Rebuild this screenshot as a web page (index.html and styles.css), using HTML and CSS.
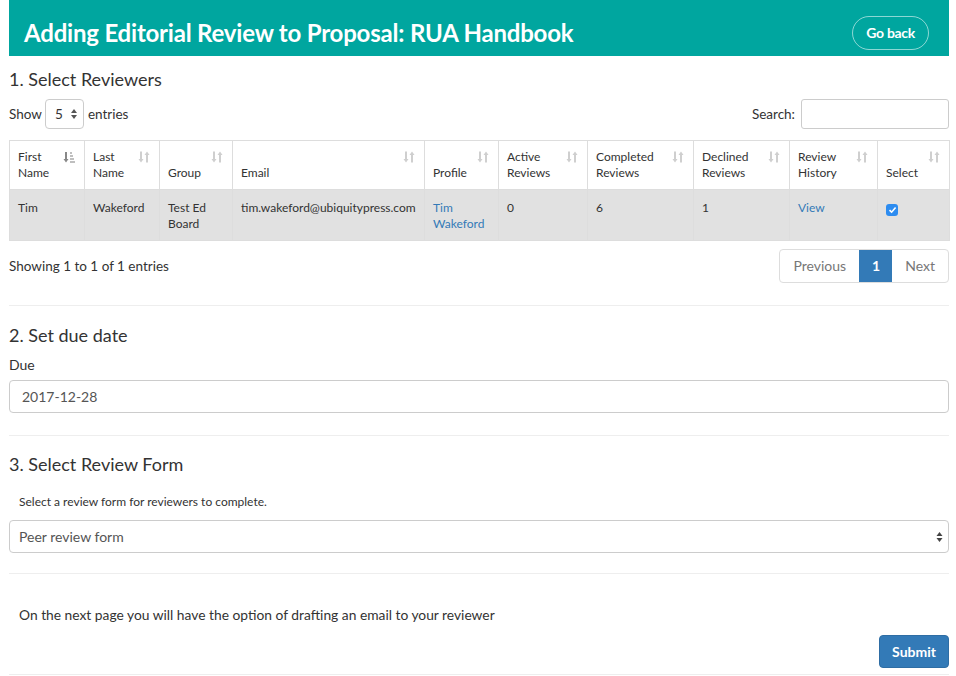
FILE: index.html
```html
<!DOCTYPE html>
<html lang="en">
<head>
    <meta charset="UTF-8">
    <title>Add Editorial Review</title>
    <link rel="stylesheet" href="styles.css">
</head>
<body>
    <div class="page">
        <div class="header">
            <h1>Adding Editorial Review to Proposal: RUA Handbook</h1>
            <a class="back" href="#">Go back</a>
        </div>

        <h3 class="first">1. Select Reviewers</h3>
        <div class="dt-top">
            <label class="length">Show
                <span class="mini-select">5 <svg width="6" height="10" viewBox="0 0 6 10"><path d="M3 0L6 4H0z M3 10L0 6H6z" fill="#555"/></svg></span>
                entries</label>
            <label class="search">Search: <input type="text"></label>
        </div>

        <table class="reviewers">
            <colgroup>
                <col style="width: 75px"><col style="width: 75px"><col style="width: 73px"><col style="width: 192px"><col style="width: 74px">
                <col style="width: 89px"><col style="width: 106px"><col style="width: 96px"><col style="width: 88px"><col style="width: 72px">
            </colgroup>
            <thead>
                <tr>
                    <th>First<br>Name <svg class="sort on" viewBox="0 0 12 12"><path d="M3 1V9" stroke="#888" stroke-width="2"/><path d="M0.5 8L3 11.5L5.5 8z" fill="#888"/><path d="M7 2H9M7 5H10M7 8H11M7 11H12" stroke="#aaa" stroke-width="1.6"/></svg></th>
                    <th>Last<br>Name <svg class="sort" viewBox="0 0 12 12"><use href="#sort"/></svg></th>
                    <th>Group <svg class="sort" viewBox="0 0 12 12"><use href="#sort"/></svg></th>
                    <th>Email <svg class="sort" viewBox="0 0 12 12"><use href="#sort"/></svg></th>
                    <th>Profile <svg class="sort" viewBox="0 0 12 12"><use href="#sort"/></svg></th>
                    <th>Active<br>Reviews <svg class="sort" viewBox="0 0 12 12"><use href="#sort"/></svg></th>
                    <th>Completed<br>Reviews <svg class="sort" viewBox="0 0 12 12"><use href="#sort"/></svg></th>
                    <th>Declined<br>Reviews <svg class="sort" viewBox="0 0 12 12"><use href="#sort"/></svg></th>
                    <th>Review<br>History <svg class="sort" viewBox="0 0 12 12"><use href="#sort"/></svg></th>
                    <th>Select <svg class="sort" viewBox="0 0 12 12"><use href="#sort"/></svg></th>
                </tr>
            </thead>
            <tbody>
                <tr>
                    <td>Tim</td>
                    <td>Wakeford</td>
                    <td>Test Ed<br>Board</td>
                    <td>tim.wakeford@ubiquitypress.com</td>
                    <td><a href="#">Tim<br>Wakeford</a></td>
                    <td>0</td>
                    <td>6</td>
                    <td>1</td>
                    <td><a href="#">View</a></td>
                    <td><span class="check"><svg width="9" height="8" viewBox="0 0 9 8"><path d="M1.5 4.2L3.6 6.2L7.6 1.5" stroke="#fff" stroke-width="1.6" fill="none"/></svg></span></td>
                </tr>
            </tbody>
        </table>

        <svg width="0" height="0" class="defs">
            <symbol id="sort" viewBox="0 0 12 12">
                <path d="M3 0.5V8.5" stroke="#cfcfcf" stroke-width="2"/>
                <path d="M0.5 8L3 11.5L5.5 8z" fill="#cfcfcf"/>
                <path d="M9 3.5V11.5" stroke="#cfcfcf" stroke-width="2"/>
                <path d="M6.5 4L9 0.5L11.5 4z" fill="#cfcfcf"/>
            </symbol>
        </svg>

        <div class="dt-bottom">
            <div class="info">Showing 1 to 1 of 1 entries</div>
            <div class="pager">
                <a class="prev">Previous</a>
                <a class="current">1</a>
                <a class="next">Next</a>
            </div>
        </div>

        <hr>

        <h3>2. Set due date</h3>
        <label class="field-label">Due</label>
        <div class="input">2017-12-28</div>

        <hr>

        <h3>3. Select Review Form</h3>
        <p class="help">Select a review form for reviewers to complete.</p>
        <div class="input select">Peer review form
            <svg width="7" height="12" viewBox="0 0 7 12"><path d="M3.5 1L6.5 5H0.5z M3.5 11L0.5 7H6.5z" fill="#444"/></svg>
        </div>

        <hr class="after-select">

        <p class="note">On the next page you will have the option of drafting an email to your reviewer</p>
        <div class="actions"><button class="submit">Submit</button></div>
        <hr class="last">
    </div>
</body>
</html>
```

FILE: styles.css
```css
body { margin: 0; font-family: Lato, "Open Sans", sans-serif; font-size: 13.5px; color: #333; background: #fff; }
.page { width: 940px; margin: 0 0 0 9px; }
a { color: #337ab7; text-decoration: none; }
.defs { position: absolute; }

/* HEADER */
.header { background-color: #00a69f; height: 56px; display: flex; align-items: center; justify-content: space-between; padding: 0 20px 0 15px; }
.header h1 { margin: 0; color: white; font-size: 24px; font-weight: bold; letter-spacing: -0.2px; padding-top: 8px; }
.back { color: white; font-weight: bold; font-size: 14px; border: 1px solid rgba(255,255,255,0.55); border-radius: 17px; padding: 7px 13px 8px; margin-top: 10px; letter-spacing: -0.3px; }

h3 { font-size: 18px; font-weight: normal; margin: 11px 0 10px; }
h3.first { margin-top: 12px; margin-bottom: 9px; }

/* DATATABLE TOP */
.dt-top { display: flex; justify-content: space-between; align-items: center; height: 30px; margin-bottom: 11px; }
.length, .search { display: flex; align-items: center; }
.mini-select { display: inline-flex; align-items: center; justify-content: space-between; width: 22px; height: 28px; border: 1px solid #ccc; border-radius: 4px; padding: 0 6px 0 9px; margin: 0 4px 0 3px; }
.search input { width: 146px; height: 28px; border: 1px solid #ccc; border-radius: 3px; margin: 0 0 0 6px; padding: 0; }

/* TABLE */
.reviewers { width: 940px; table-layout: fixed; border-collapse: collapse; border: 1px solid #ddd; font-size: 12px; }
.reviewers th, .reviewers td { border: 1px solid #ddd; text-align: left; padding: 8px 8px; line-height: 16px; }
.reviewers th { font-weight: normal; position: relative; vertical-align: bottom; padding: 8px 8px 8px; }
.reviewers td { vertical-align: top; background: #e1e1e1; padding: 10px 8px 8px; }

.sort { position: absolute; right: 9px; top: 10px; width: 12px; height: 12px; }

.check { display: inline-flex; align-items: center; justify-content: center; width: 12px; height: 12px; background: #2d8cf0; border-radius: 3px; margin-top: 4px; }

/* BOTTOM */
.dt-bottom { display: flex; justify-content: space-between; align-items: center; margin-top: 8px; }
.pager { display: flex; border: 1px solid #ddd; border-radius: 4px; font-size: 14px; }
.pager a { padding: 8px 13px; color: #777; line-height: 16px; }
.pager .current { background: #337ab7; color: white; font-weight: bold; padding: 8px 12px 8px 13px; }

hr { border: none; border-top: 1px solid #eee; margin: 22px 0 17.5px; }
hr.after-select { margin-top: 20px; }

.field-label { display: block; font-size: 14px; margin-bottom: 7px; }
.input { height: 33px; box-sizing: border-box; border: 1px solid #ccc; border-radius: 4px; padding: 0 12px; display: flex; align-items: center; justify-content: space-between; font-size: 14px; color: #555; }
.input.select { padding: 0 5px 0 9px; }
.help { font-size: 12px; margin: 19px 10px 11px; }
.note { font-size: 13.8px; margin: 32px 10px 12px; }
.actions { display: flex; justify-content: flex-end; }
.submit { background: #337ab7; border: 1px solid #2e6da4; color: white; font-family: Lato, sans-serif; font-weight: bold; font-size: 14px; padding: 7px 12px; border-radius: 4px; }
hr.last { margin: 6px 0 0; }
```
